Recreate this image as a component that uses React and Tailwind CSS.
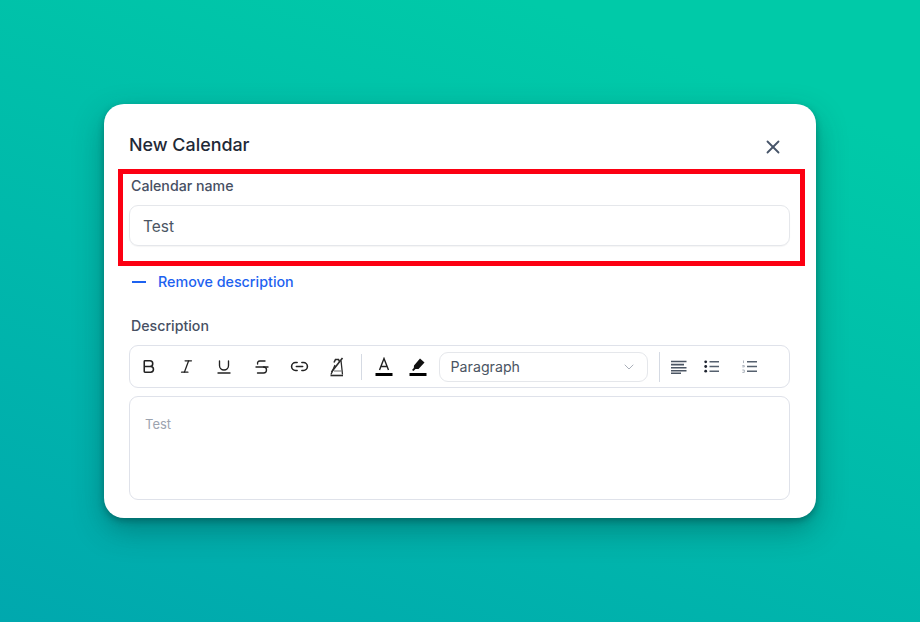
import { Bold, ChevronDown, Italic, Link2, Strikethrough, Underline, X } from 'lucide-react';

function ToolIcon({ children }) {
  return <span className="w-[37.6px] flex items-center justify-center text-[#222]">{children}</span>;
}

function ClearFormat() {
  return (
    <svg width="18" height="20" viewBox="0 0 18 20" fill="none" stroke="#2b2b2b" strokeWidth="1.3">
      <path d="M3 17.5 L7 8 M13 3.5 L14.5 17.5 Z" />
      <path d="M6 14h7.5" strokeWidth="1.1" stroke="#777" />
      <path d="M2.5 18.5h12.5" strokeWidth="1.6" />
      <path d="M3.5 15 L14.5 1" strokeWidth="1.6" />
      <path d="M6 5.5 L7.5 2.5h3l1 2" strokeWidth="1.6" />
    </svg>
  );
}

function TextColor() {
  return (
    <svg width="18" height="20" viewBox="0 0 18 20" fill="none">
      <path d="M4.5 13 L9 1.5 L13.5 13 M6 9.5h6" stroke="#222" strokeWidth="1.4" />
      <rect x="0.5" y="16" width="17" height="3" fill="#000" />
    </svg>
  );
}

function Highlight() {
  return (
    <svg width="18" height="20" viewBox="0 0 18 20" fill="none">
      <path d="M5 8.5 L11 1.5 L15.5 5.5 L9.5 12 L6.5 12 L4.5 14 L3 13 L4.8 11 Z" fill="#111" />
      <rect x="0.5" y="16" width="17" height="3" fill="#000" />
    </svg>
  );
}

function AlignLeft() {
  return (
    <svg width="16" height="14" viewBox="0 0 16 14" stroke="#4b5563" strokeWidth="1.6">
      <path d="M0 1.5h15.5M0 4.6h13M0 7.7h15.5M0 10.8h15.5M0 13.4h10" />
    </svg>
  );
}

function BulletList() {
  return (
    <svg width="15" height="13" viewBox="0 0 15 13" stroke="#55606e" strokeWidth="1.5" fill="#1f2430">
      <circle cx="1.7" cy="1.8" r="1.4" stroke="none" />
      <circle cx="1.7" cy="6.5" r="1.4" stroke="none" />
      <circle cx="1.7" cy="11.2" r="1.4" stroke="none" />
      <path d="M5.5 1.8h9.5M5.5 6.5h9.5M5.5 11.2h9.5" />
    </svg>
  );
}

function NumberList() {
  return (
    <svg width="15" height="13" viewBox="0 0 15 13" stroke="#55606e" strokeWidth="1.5" fill="none">
      <path d="M1.5 .5v2.6M.3 5.6h2v1.3h-2M.3 10h2v2.4h-2" strokeWidth="0.7" stroke="#8a93a0" />
      <path d="M5 1.8h10M5 6.5h10M5 11.2h10" />
    </svg>
  );
}

export default function App() {
  return (
    <div className="w-[920px] h-[622px] overflow-hidden flex items-start justify-center pt-[104px] bg-[linear-gradient(200deg,#00caa8_15%,#00a8ae_100%)] font-['Inter',sans-serif]">
      <div className="w-[712px] h-[414px] bg-white rounded-[20px] shadow-[0_3px_6px_rgba(0,50,50,0.35),0_12px_30px_rgba(0,50,50,0.35)] pt-[29px] pl-[15px] pr-[11px]">
        <div className="flex justify-between pl-[10px] h-[36px]">
          <h2 className="text-[17.9px] leading-[24px] font-medium text-[#1f2937]">New Calendar</h2>
          <X size={22} strokeWidth={2} className="text-[#475569] mt-[3px] mr-[21px]" />
        </div>

        <div className="border-[5px] border-[#fc0012] h-[97px] pl-[6px] pr-[10px] w-[687px] -ml-px">
          <label className="block text-[14.2px] leading-[20px] font-medium text-[#475063] pl-[2px] pt-[2px] mb-[9px]">Calendar name</label>
          <div className="h-[41px] rounded-[9px] border border-[#e5e7eb] flex items-center pl-[13px] pt-[2px] text-[15.5px] text-[#4b5563] shadow-[0_1px_1px_rgba(0,0,0,0.04)]">
            Test
          </div>
        </div>

        <div className="flex items-center pl-[13px] mt-[5px] h-[22px] text-[14.3px] font-medium text-[#1d62f0]">
          <span className="w-[14px] h-[2px] bg-[#1d62f0] mr-[12px]" />
          Remove description
        </div>

        <div className="pl-[10px] pr-[15px]">
          <div className="mt-[23px] text-[14.2px] leading-[20px] font-medium text-[#475063] pl-[2px]">Description</div>
          <div className="mt-[9px] h-[43px] w-[661px] rounded-[9px] border border-[#dfe2ea] flex items-center">
            <ToolIcon><Bold size={17} strokeWidth={2.2} /></ToolIcon>
            <ToolIcon><Italic size={17} strokeWidth={1.8} /></ToolIcon>
            <ToolIcon><Underline size={18} strokeWidth={1.8} /></ToolIcon>
            <ToolIcon><Strikethrough size={18} strokeWidth={1.8} /></ToolIcon>
            <ToolIcon><Link2 size={19} strokeWidth={2} /></ToolIcon>
            <ToolIcon><ClearFormat /></ToolIcon>
            <span className="w-px h-[26px] bg-[#d5dae3] ml-[5px] mr-[13px]" />
            <span className="flex mr-[16px]"><TextColor /></span>
            <span className="flex mr-[12px]"><Highlight /></span>
            <div className="w-[209px] h-[30px] rounded-[9px] border border-[#e5e7eb] flex items-center justify-between pl-[11px] pr-[10px] text-[14.2px] text-[#4b5563]">
              Paragraph
              <ChevronDown size={16} strokeWidth={1.3} className="text-[#9ca3af]" />
            </div>
            <span className="w-px h-[30px] bg-[#d5dae3] ml-[11px] mr-[11px]" />
            <span className="flex mr-[17px]"><AlignLeft /></span>
            <span className="flex mr-[23px]"><BulletList /></span>
            <span className="flex"><NumberList /></span>
          </div>
          <div className="mt-[8px] h-[104px] w-[661px] rounded-[9px] border border-[#dfe2ea] pl-[15px] pt-[18px] text-[13px] leading-[18px] text-[#9ca3af]">
            Test
          </div>
        </div>
      </div>
    </div>
  );
}
